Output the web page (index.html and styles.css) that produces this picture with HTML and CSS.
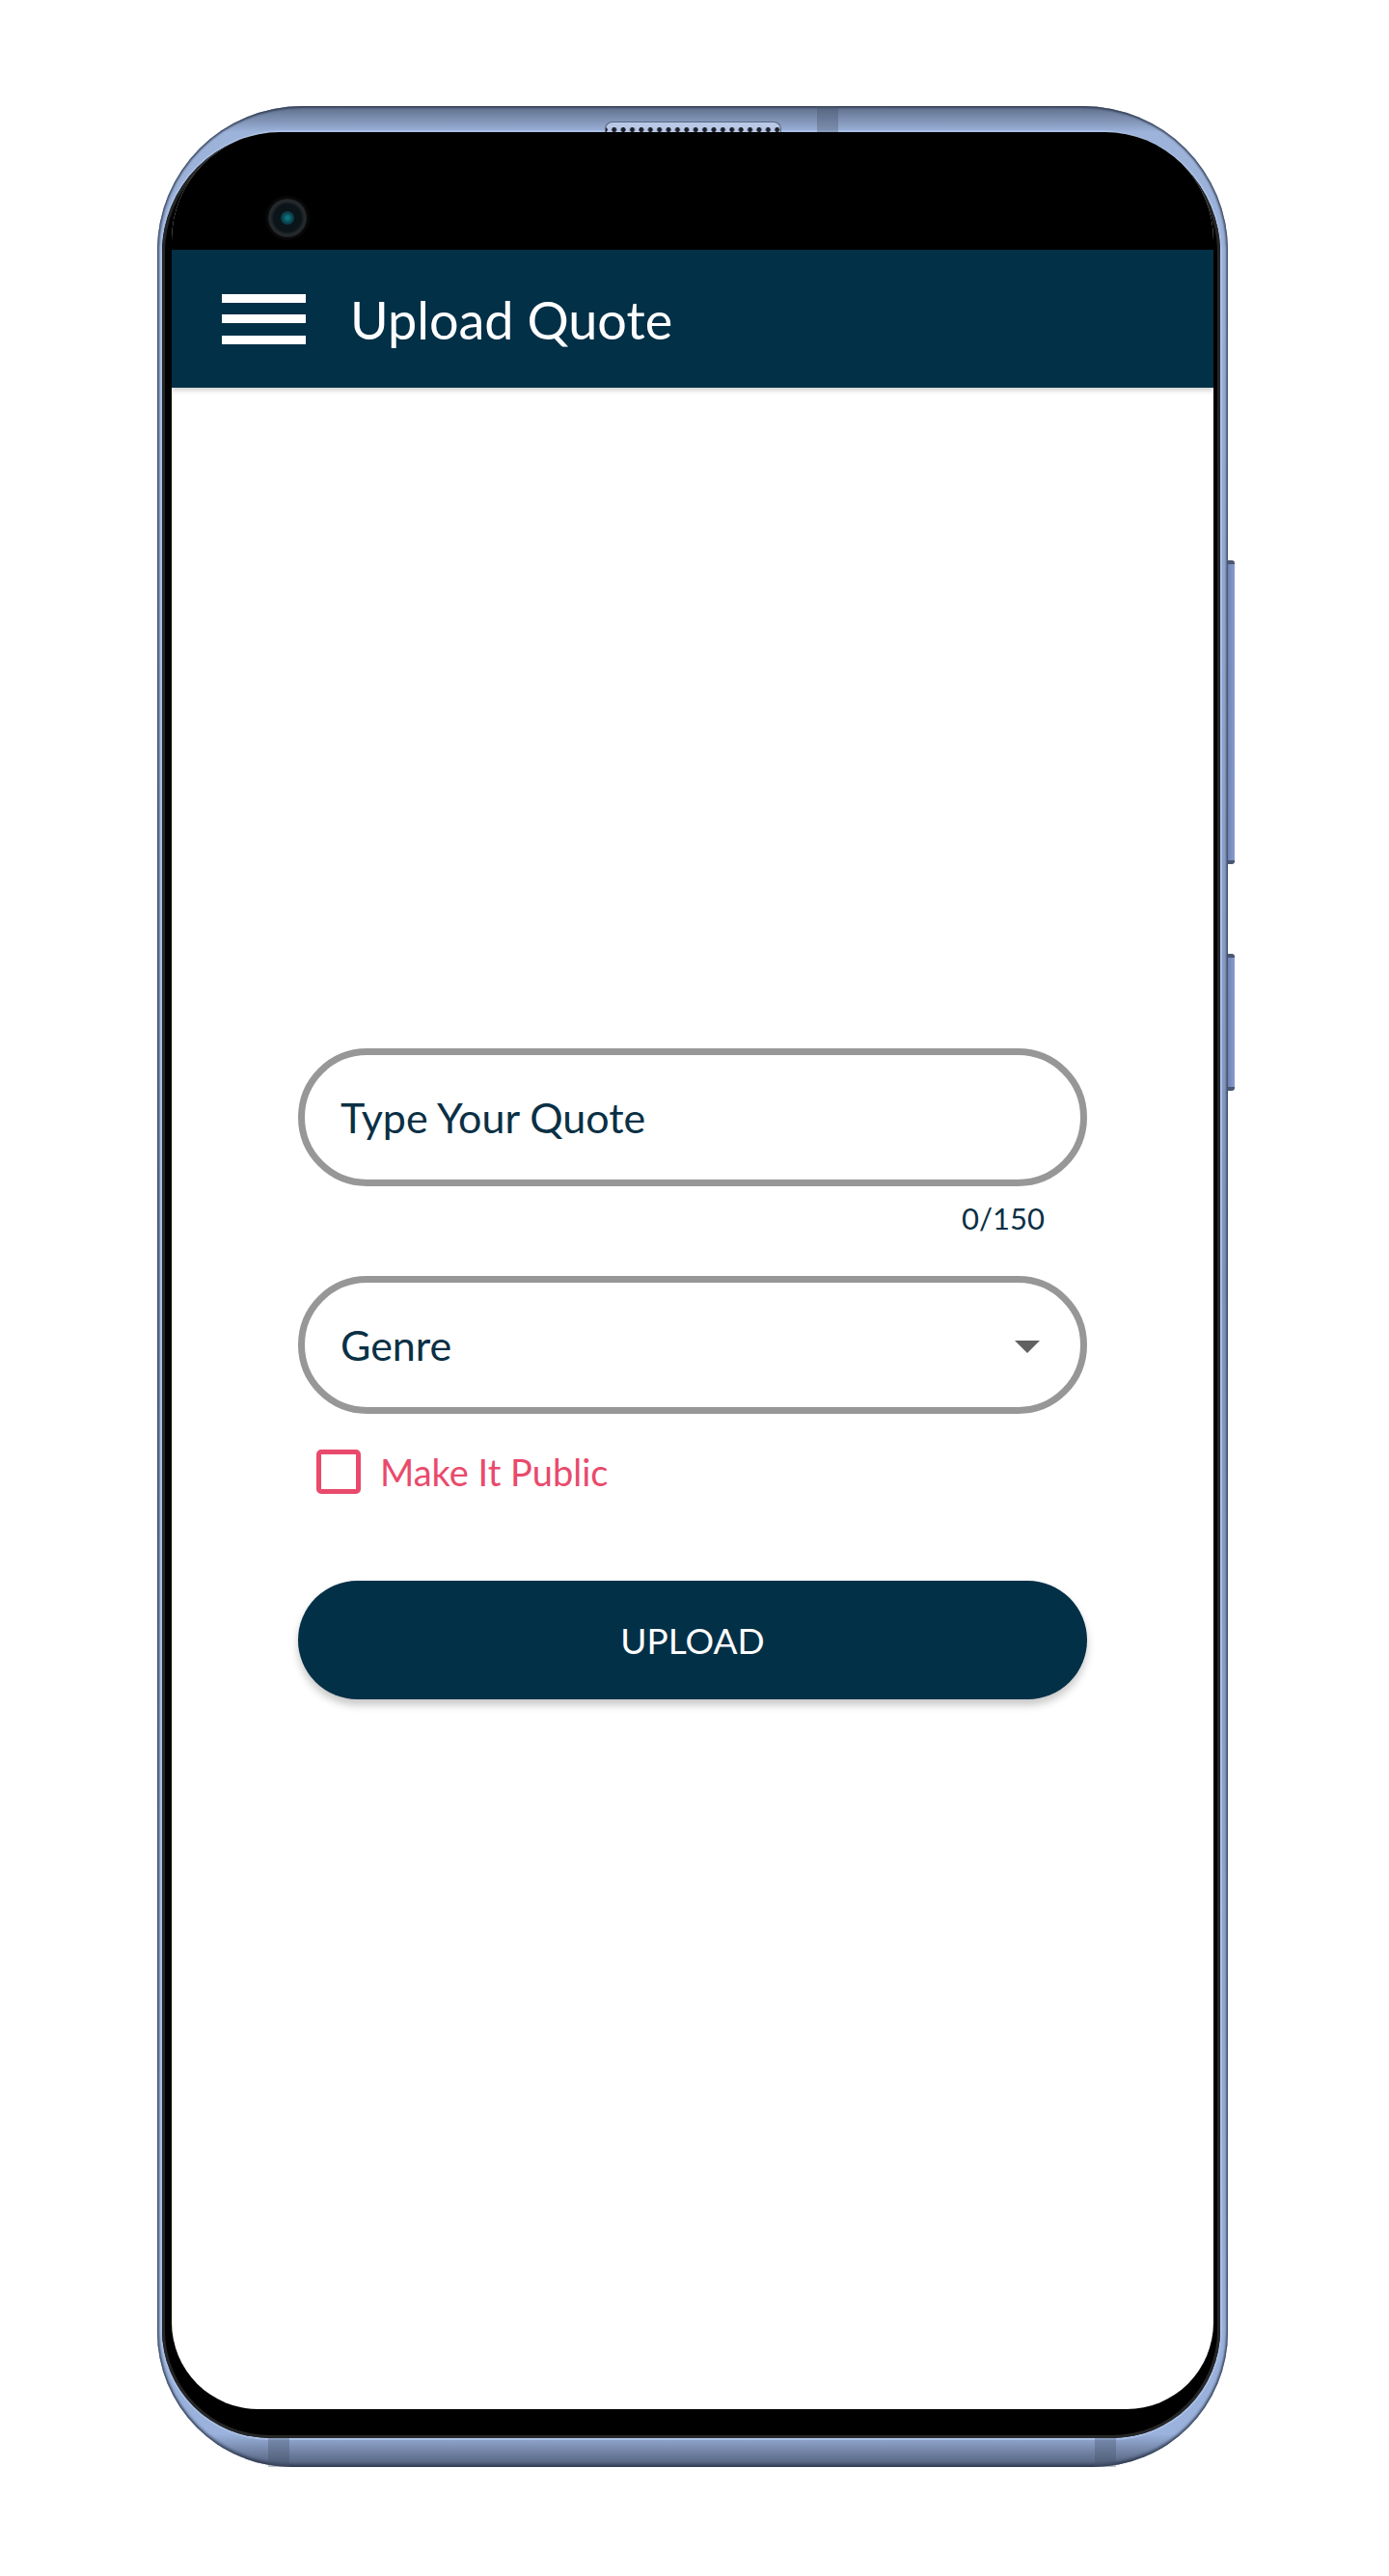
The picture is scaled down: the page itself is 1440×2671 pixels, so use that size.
FILE: index.html
```html
<!DOCTYPE html>
<html lang="en">
<head>
<meta charset="utf-8">
<title>Upload Quote</title>
<link rel="stylesheet" href="styles.css">
</head>
<body>
<div class="phone">
  <div class="speaker"></div>
  <div class="band band-top"></div>
  <div class="band band-bl"></div>
  <div class="band band-br"></div>
  <div class="side-btn btn-vol"></div>
  <div class="side-btn btn-pwr"></div>
  <div class="bezel">
    <div class="screen">
      <div class="status">
        <div class="camera"><div class="lens"></div></div>
      </div>
      <header class="appbar">
        <div class="menu">
          <span class="bar"></span>
          <span class="bar"></span>
          <span class="bar"></span>
        </div>
        <h1 class="title">Upload Quote</h1>
      </header>
      <main class="content">
        <form class="form">
          <div class="field">
            <span class="placeholder">Type Your Quote</span>
          </div>
          <div class="counter">0/150</div>
          <div class="field select">
            <span class="placeholder">Genre</span>
            <span class="caret"></span>
          </div>
          <label class="check-row">
            <span class="checkbox"></span>
            <span class="check-label">Make It Public</span>
          </label>
          <div class="upload">UPLOAD</div>
        </form>
      </main>
    </div>
  </div>
</div>
</body>
</html>
```

FILE: styles.css
```css
* { box-sizing: border-box; }

html, body {
  margin: 0;
  padding: 0;
  background: #ffffff;
}

body {
  font-family: "Lato", "Liberation Sans", sans-serif;
  width: 1440px;
  height: 2671px;
  overflow: hidden;
}

.phone {
  position: relative;
  margin: 110px 0 0 163px;
  width: 1110px;
  height: 2448px;
  display: flex;
  flex-direction: column;
  padding: 27px 8px 30px 5px;
  border-radius: 150px 150px 140px 140px;
  background: linear-gradient(180deg, #5d6d8a 0%, #9db3da 1.1%, #7f94bb 50%, #9bb2dc 98.6%, #4e5c77 100%);
  box-shadow: inset 0 2px 2px rgba(40, 50, 70, 0.6), inset 0 -3px 3px rgba(40, 50, 70, 0.6), inset 2px 0 2px rgba(40, 50, 70, 0.5), inset -2px 0 2px rgba(40, 50, 70, 0.5);
}

.speaker {
  position: absolute;
  left: 464px;
  top: 16px;
  width: 183px;
  height: 11px;
  border-radius: 8px 8px 0 0;
  border: 1px solid #5a6782;
  border-bottom: none;
  background-color: #b9c8e6;
  background-image: radial-gradient(circle, #1a1f2a 2.2px, transparent 2.8px);
  background-size: 9.4px 11px;
  background-position: 4px 2px;
}

.band {
  position: absolute;
  width: 22px;
  background: rgba(70, 82, 105, 0.35);
}
.band-top { left: 684px; top: 0; height: 27px; }
.band-bl { left: 115px; bottom: 0; height: 30px; }
.band-br { left: 972px; bottom: 0; height: 30px; }

.side-btn {
  position: absolute;
  left: 1110px;
  width: 7px;
  border-radius: 0 3px 3px 0;
  background: linear-gradient(90deg, #6f82b6, #8a9cd0);
  border-top: 4px solid #4b5672;
  border-bottom: 4px solid #4b5672;
}
.btn-vol { top: 471px; height: 315px; }
.btn-pwr { top: 879px; height: 142px; }

.bezel {
  flex: 1;
  display: flex;
  flex-direction: column;
  background: #000;
  border-radius: 125px 125px 112px 112px;
  padding: 0 7px 30px 10px;
  box-shadow: 0 0 0 2px #a9bfe6, inset 0 0 0 3px #262626;
}

.screen {
  flex: 1;
  display: flex;
  flex-direction: column;
  background: #ffffff;
  border-radius: 112px 112px 90px 90px;
  overflow: hidden;
}

.status {
  height: 122px;
  flex: none;
  background: #000;
  padding: 69px 0 0 100px;
}

.camera {
  width: 40px;
  height: 40px;
  border-radius: 50%;
  background: radial-gradient(circle, #0b1418 0 50%, #252a2d 62%, #121212 100%);
  display: flex;
  align-items: center;
  justify-content: center;
  box-shadow: 0 0 0 3px #080808;
}

.lens {
  width: 14px;
  height: 14px;
  border-radius: 50%;
  background: radial-gradient(circle, #0f6f7c 0 20%, #0a4a55 45%, #06262d 100%);
}

.appbar {
  height: 143px;
  flex: none;
  background: #023047;
  display: flex;
  align-items: center;
  padding-left: 52px;
  gap: 46px;
  box-shadow: 0 3px 5px rgba(0, 0, 0, 0.18);
  position: relative;
  z-index: 1;
}

.menu {
  width: 87px;
  height: 52px;
  display: flex;
  flex-direction: column;
  justify-content: space-between;
}

.bar {
  display: block;
  height: 9px;
  background: #ffffff;
}

.title {
  margin: 0;
  font-family: "Lato", "Liberation Sans", sans-serif;
  font-weight: 400;
  font-size: 54px;
  color: #ffffff;
  line-height: 1;
  padding-top: 2px;
}

.content {
  flex: 1;
  padding-top: 685px;
}

.form {
  width: 818px;
  margin: 0 auto;
  display: flex;
  flex-direction: column;
}

.field {
  height: 143px;
  border: 7px solid #979797;
  border-radius: 72px;
  padding: 0 42px 0 37px;
  display: flex;
  align-items: center;
  justify-content: space-between;
}

.placeholder {
  font-size: 43px;
  color: #0a3045;
  line-height: 1;
}

.counter {
  margin-top: 13px;
  padding-right: 44px;
  text-align: right;
  font-size: 31px;
  line-height: 40px;
  color: #0a3045;
}

.select {
  margin-top: 40px;
}

.caret {
  width: 0;
  height: 0;
  border-left: 13px solid transparent;
  border-right: 13px solid transparent;
  border-top: 13px solid #616161;
  margin-top: 4px;
}

.check-row {
  margin-top: 37px;
  padding-left: 19px;
  display: flex;
  align-items: center;
  gap: 20px;
}

.checkbox {
  width: 46px;
  height: 46px;
  border: 5px solid #e94a6c;
  border-radius: 5px;
}

.check-label {
  font-size: 38px;
  color: #e94a6c;
  line-height: 1;
}

.upload {
  margin-top: 90px;
  height: 123px;
  border-radius: 62px;
  background: #023047;
  color: #ffffff;
  font-size: 37px;
  display: flex;
  align-items: center;
  justify-content: center;
  box-shadow: 0 6px 8px rgba(0, 0, 0, 0.22);
}
```
